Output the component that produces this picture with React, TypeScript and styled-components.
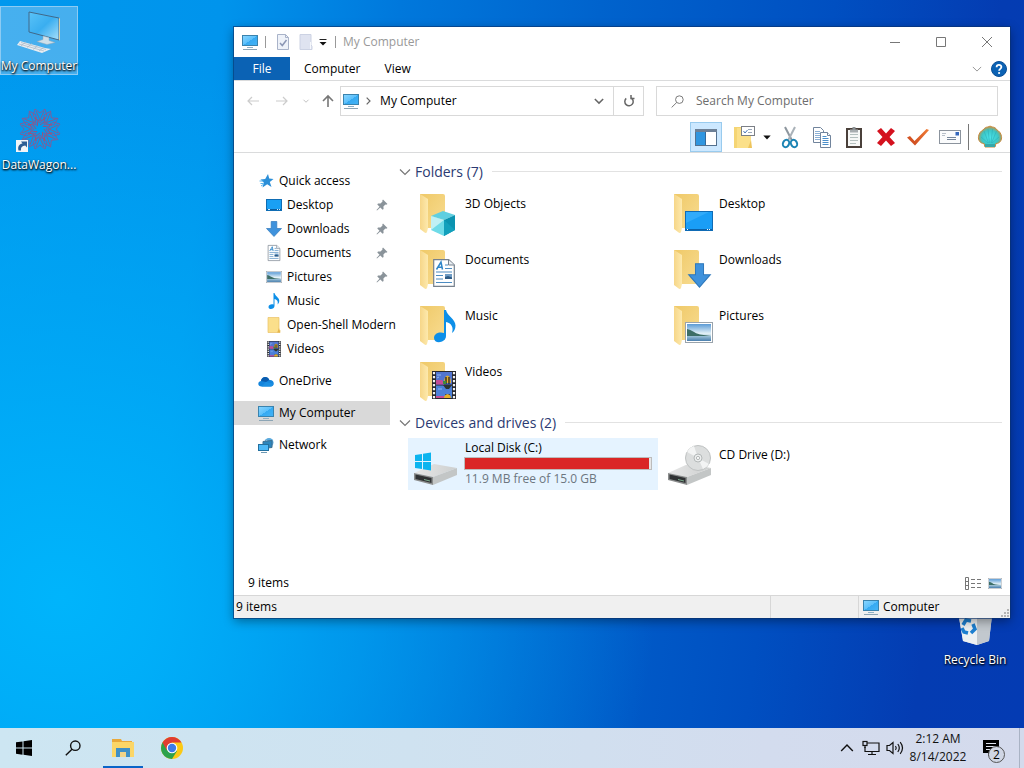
import React from 'react';
import styled, { createGlobalStyle, css } from 'styled-components';

const GlobalStyle = createGlobalStyle`
  * { box-sizing: border-box; }
  html, body { margin: 0; padding: 0; }
  body, button, input {
    font-family: "Open Sans", "Noto Sans", sans-serif;
    font-size: 12px;
    line-height: 16px;
    color: #000;
  }
  button { margin: 0; padding: 0; border: 0; background: none; cursor: default; }
  ul { list-style: none; margin: 0; padding: 0; }
  h2 { margin: 0; font-weight: 400; }
  svg { display: block; flex: none; overflow: visible; }
`;

const Screen = styled.div`
  display: flex;
  flex-direction: column;
  height: 100vh;
  min-height: 600px;
  overflow: hidden;
`;

const Desktop = styled.main`
  position: relative;
  flex: 1;
  min-height: 0;
  background:
    radial-gradient(ellipse 58% 75% at 6% 82%, rgba(0, 182, 252, 0.95), rgba(0, 174, 248, 0.6) 50%, rgba(0, 160, 240, 0) 100%),
    linear-gradient(97deg, #0098ee 0%, #0094ec 20%, #0078dc 36%, #0063cd 54%, #004fc1 75%, #043cb2 90%, #043bb3 100%);
`;

const DesktopItem = styled.button<{ $selected?: boolean }>`
  position: absolute;
  display: flex;
  flex-direction: column;
  align-items: center;
  justify-content: space-between;
  width: 78px;
  height: 69px;
  color: #fff;
  text-shadow: 0 1px 2px #000, 1px 1px 2px rgba(0, 0, 0, 0.8);
  white-space: nowrap;
  border: 1px solid transparent;
  ${(p) => p.$selected && css`
    background: rgba(140, 200, 240, 0.5);
    border-color: rgba(170, 215, 245, 0.7);
  `}
`;
const ComputerSpot = styled(DesktopItem)`left: 0; top: 6px;`;
const ShortcutSpot = styled(DesktopItem)`left: 0; top: 105px;`;
const RecycleSpot = styled(DesktopItem)`right: 10px; bottom: 59px;`;

const Window = styled.section`
  position: absolute;
  left: 234px;
  right: 14px;
  top: 27px;
  bottom: 110px;
  display: flex;
  flex-direction: column;
  background: #fff;
  box-shadow: 0 0 0 1px rgba(10, 50, 110, 0.6), 0 3px 10px rgba(0, 0, 0, 0.4);
`;

const TitleBar = styled.header`
  display: flex;
  align-items: center;
  height: 30px;
  padding-left: 8px;
`;
const Title = styled.h1`
  flex: 1;
  margin: 0 0 0 7px;
  font-size: 12px;
  font-weight: 400;
  color: #999;
`;
const Rule = styled.span<{ $space: string; $tall?: boolean }>`
  width: 1px;
  height: ${(p) => (p.$tall ? 26 : 12)}px;
  margin: ${(p) => p.$space};
  background: ${(p) => (p.$tall ? '#777' : '#999')};
`;
const IconButton = styled.button<{ $w: number; $h?: number; $active?: boolean }>`
  display: flex;
  align-items: center;
  justify-content: center;
  flex: none;
  width: ${(p) => p.$w}px;
  height: ${(p) => p.$h ?? 30}px;
  ${(p) => p.$active && css`
    background: #cce8ff;
    border: 1px solid #99cbee;
  `}
`;

const Ribbon = styled.nav`
  display: flex;
  align-items: stretch;
  height: 24px;
  padding-right: 3px;
  border-bottom: 1px solid #dadbdc;
`;
const RibbonTab = styled.button<{ $file?: boolean }>`
  padding: 0 10px 0 14px;
  ${(p) => p.$file && css`
    width: 56px;
    padding: 0;
    color: #fff;
    background: #0b62b4;
  `}
`;
const Spacer = styled.span`flex: 1;`;

const AddressRow = styled.div`
  display: flex;
  align-items: center;
  height: 40px;
  padding: 0 12px 0 4px;
`;
const AddressBox = styled.div`
  display: flex;
  align-items: center;
  flex: 304 1 304px;
  height: 30px;
  border: 1px solid #d9d9d9;
`;
const Crumb = styled.button`
  display: flex;
  align-items: center;
  gap: 5px;
  flex: 1;
  padding-left: 2px;
  text-align: left;
`;
const Refresh = styled(IconButton)`
  border-left: 1px solid #d9d9d9;
`;
const SearchBox = styled.label`
  display: flex;
  align-items: center;
  gap: 12px;
  flex: 342 1 342px;
  height: 30px;
  margin-left: 12px;
  padding: 0 14px;
  border: 1px solid #d9d9d9;
`;
const SearchInput = styled.input`
  flex: 1;
  min-width: 0;
  padding: 0;
  border: 0;
  outline: 0;
  background: none;
  &::placeholder { color: #6d6d6d; opacity: 1; }
`;

const Toolbar = styled.div`
  display: flex;
  align-items: flex-end;
  justify-content: flex-end;
  height: 32px;
  padding-right: 4px;
  border-bottom: 1px solid #dadbdc;
`;
const SplitButton = styled.div`
  display: flex;
  margin-left: 6px;
`;

const Body = styled.div`
  display: flex;
  flex: 1;
  min-height: 0;
`;
const NavPane = styled.nav`
  flex: none;
  width: 156px;
  padding-top: 16px;
`;
const NavGroup = styled.ul`
  margin-bottom: 8px;
`;
const NavItem = styled.button<{ $child?: boolean; $selected?: boolean }>`
  display: flex;
  align-items: center;
  gap: 5px;
  width: 100%;
  height: 24px;
  padding-left: ${(p) => (p.$child ? 32 : 24)}px;
  padding-right: 2px;
  text-align: left;
  white-space: nowrap;
  background: ${(p) => (p.$selected ? '#d9d9d9' : 'none')};
`;
const NavLabel = styled.span`
  flex: 1;
`;

const Files = styled.div`
  flex: 1;
  min-width: 0;
  padding: 3px 8px 0 9px;
`;
const GroupHeader = styled.h2`
  display: flex;
  align-items: center;
  gap: 4px;
  height: 31px;
  font-size: 14px;
  line-height: 20px;
  color: #2b3a72;
  &::after {
    content: "";
    flex: 1;
    height: 1px;
    margin-left: 5px;
    background: #e2e2e2;
  }
`;
const Tiles = styled.ul`
  display: grid;
  grid-template-columns: repeat(auto-fill, 250px);
  gap: 4px;
  padding-left: 9px;
`;
const Tile = styled.li<{ $hover?: boolean }>`
  display: flex;
  gap: 5px;
  height: 52px;
  padding-left: 4px;
  background: ${(p) => (p.$hover ? '#e5f3ff' : 'none')};
`;
const TileText = styled.div<{ $drive?: boolean }>`
  display: flex;
  flex-direction: column;
  flex: 1;
  padding-top: ${(p) => (p.$drive ? 2 : 9)}px;
  padding-right: 6px;
`;
const UsageTrack = styled.div`
  height: 13px;
  margin: 1px 0 1px -1px;
  border: 1px solid #bcbcbc;
  background: #e6e6e6;
`;
const UsageFill = styled.div`
  height: 100%;
  background: #da2626;
`;
const Muted = styled.span`color: #6d7680;`;

const ItemCount = styled.div`
  display: flex;
  align-items: center;
  gap: 6px;
  height: 24px;
  padding: 0 7px 0 14px;
`;
const StatusBar = styled.footer`
  display: flex;
  height: 23px;
  background: #f0f0f0;
  border-top: 1px solid #d7d7d7;
`;
const StatusCell = styled.div<{ $w?: number }>`
  display: flex;
  align-items: center;
  gap: 4px;
  flex: ${(p) => (p.$w ? 'none' : '1')};
  width: ${(p) => (p.$w ? p.$w + 'px' : 'auto')};
  padding-left: ${(p) => (p.$w ? 4 : 2)}px;
  & + & { border-left: 1px solid #d7d7d7; }
`;
const GripCorner = styled.span`
  align-self: flex-end;
  padding: 0 1px 1px 0;
`;

const Taskbar = styled.footer`
  display: flex;
  flex: none;
  height: 40px;
  background: linear-gradient(90deg, #cde6f2 0%, #cfe2f0 40%, #d3dcee 75%, #d4daec 100%);
`;
const TaskButton = styled(IconButton)<{ $running?: boolean }>`
  margin-right: 1px;
  ${(p) => p.$running && css`
    background: linear-gradient(#0a64c8, #0a64c8) center bottom / 40px 2px no-repeat;
  `}
`;
const Clock = styled.button`
  width: 62px;
  line-height: 18px;
  color: #111;
`;
const ShowDesktop = styled.button`
  width: 5px;
  border-left: 1px solid #a9b3c4;
`;

/* ---------- icons ---------- */

const Monitor = () => (
  <svg width="16" height="16" viewBox="0 0 16 16">
    <defs>
      <linearGradient id="screen" x1="0" y1="0" x2="1" y2="1">
        <stop offset="0" stopColor="#8ad6ff" />
        <stop offset="0.5" stopColor="#5cc0fb" />
        <stop offset="0.51" stopColor="#36aaf2" />
        <stop offset="1" stopColor="#45b4f6" />
      </linearGradient>
    </defs>
    <rect x="0.5" y="1.5" width="15" height="10" fill="url(#screen)" stroke="#3a83ae" />
    <path d="M5 13.5h6" stroke="#8fb0c4" />
    <path d="M1 15.5h14" stroke="#8ca5b5" />
  </svg>
);
const CheckPage = () => (
  <svg width="14" height="16" viewBox="0 0 14 16" fill="none">
    <path d="M1.500.5h8l3 3v12h-11z" fill="#eef2f9" stroke="#a9b3c9" />
    <path d="M9.500.5v3h3" stroke="#a9b3c9" />
    <path d="M4 9l2.300 2.500L10.500 6" stroke="#8b96b4" strokeWidth="1.500" />
  </svg>
);
const BlankPage = () => (
  <svg width="14" height="16" viewBox="0 0 14 16">
    <path d="M1 .5h11v10l1 2v3H1z" fill="#dfe3f0" stroke="#ccd2e3" />
    <path d="M11.500 8v7" stroke="#f6f8fc" />
  </svg>
);
const CustomizeCaret = () => (
  <svg width="8" height="7" viewBox="0 0 8 7">
    <path d="M.5.5h7" stroke="#222" />
    <path d="M.5 3h7L4 6.500z" fill="#111" />
  </svg>
);
const Stroke = ({ d, w = 12, c = '#777', s = 1 }: { d: string; w?: number; c?: string; s?: number }) => (
  <svg width={w} height={w} viewBox="0 0 12 12" fill="none" stroke={c} strokeWidth={s}>
    <path d={d} />
  </svg>
);
const Chevron = ({ w = 10, c = '#777', s = 1.2 }: { w?: number; c?: string; s?: number }) => (
  <Stroke w={w} c={c} s={s} d="M1 3.500l5 5 5-5" />
);
const Help = () => (
  <svg width="16" height="16" viewBox="0 0 16 16" fill="none">
    <circle cx="8" cy="8" r="7.500" fill="#0b62b4" stroke="#0a4f96" />
    <path d="M5.600 6.200c0-3 4.800-3 4.800-.2 0 1.800-2.300 1.900-2.300 3.700" stroke="#fff" strokeWidth="1.800" />
    <circle cx="8.100" cy="12" r="1.100" fill="#fff" />
  </svg>
);
const Magnifier = ({ w, c, s }: { w: number; c: string; s: number }) => (
  <svg width={w} height={w} viewBox="0 0 16 16" fill="none" stroke={c} strokeWidth={s}>
    <circle cx="10.300" cy="5.700" r="4.700" />
    <path d="M7 9.200L.8 15.300" />
  </svg>
);
const RefreshIcon = () => (
  <svg width="12" height="12" viewBox="0 0 12 12" fill="none" stroke="#666" strokeWidth="1.500">
    <path d="M8.300 3A4.200 4.200 0 1 1 3.200 3.400" />
    <path d="M8 0v3.500h3.500" />
  </svg>
);
const PaneIcon = () => (
  <svg width="22" height="18" viewBox="0 0 22 18">
    <rect x="0.5" y="1.500" width="21" height="16" fill="#fff" stroke="#54718f" />
    <path d="M0 2.500h22" stroke="#6d8096" strokeWidth="3" />
    <rect x="1" y="4" width="9" height="13" fill="#2f96e0" />
    <path d="M10.500 4v13" stroke="#33699a" />
  </svg>
);
const NewFolder = () => (
  <svg width="22" height="24" viewBox="0 0 22 24">
    <path d="M1 2h10l2 1v20H1z" fill="#f5d574" />
    <path d="M4 3h14v20H4z" fill="#fbe08a" />
    <path d="M18 15l1 8h-4z" fill="#eec45c" />
    <rect x="8.500" y="1.500" width="13" height="9" fill="#fff" stroke="#7b7f86" />
    <path d="M10.500 6l1.500 2 2.500-3" fill="none" stroke="#4a76b8" />
    <path d="M15 4.500h4M15 7.500h4" stroke="#9aa7b8" />
  </svg>
);
const SmallCaret = () => (
  <svg width="8" height="5" viewBox="0 0 8 5"><path d="M.3.500h7.400L4 4.500z" fill="#111" /></svg>
);
const Scissors = () => (
  <svg width="18" height="24" viewBox="0 0 18 24" fill="none">
    <path d="M4 2l7 13.500" stroke="#8d969e" strokeWidth="2" />
    <path d="M14 2L7 15.500" stroke="#a9b1b8" strokeWidth="2" />
    <ellipse cx="5" cy="18.500" rx="3" ry="3.800" transform="rotate(25 5 18.500)" stroke="#1c84b4" strokeWidth="2" />
    <ellipse cx="13" cy="18.500" rx="3" ry="3.800" transform="rotate(-25 13 18.500)" stroke="#1c84b4" strokeWidth="2" />
  </svg>
);
const CopyIcon = () => (
  <svg width="20" height="24" viewBox="0 0 20 24" fill="#fff" stroke="#71849c">
    <path d="M1.500 2.500h7l3 3v12h-10z" />
    <path d="M3 6.500h5M3 8.500h6M3 10.500h6M3 12.500h6M3 14.500h6" stroke="#8bb0d6" />
    <path d="M8.500 7.500h7l3 3v12h-10z" />
    <path d="M15.500 7.500v3h3" />
    <path d="M10.500 11.500h4M10.500 13.500h6M10.500 15.500h6M10.500 17.500h6M10.500 19.500h6" stroke="#4b8fca" />
  </svg>
);
const Clipboard = () => (
  <svg width="18" height="24" viewBox="0 0 18 24">
    <rect x="1" y="3" width="16" height="20" fill="#4a403a" />
    <rect x="3" y="5" width="12" height="16" fill="#f7f8f7" />
    <path d="M5 4.500h8v3H5z" fill="#a8adb0" />
    <path d="M7.500 2h3v3h-3z" fill="#8b9194" />
    <path d="M5 9.500h8M5 12.500h8M5 15.500h8M5 18.500h6" stroke="#b5c0bf" />
  </svg>
);
const RedCross = () => (
  <svg width="20" height="20" viewBox="0 0 20 20">
    <path d="M1 4l4-3 5 5.500L15 1l4 3-5.500 6L19 16l-4 3-5-5.500L5 19l-4-3 5.500-6z" fill="#d4111e" />
  </svg>
);
const OrangeCheck = () => (
  <svg width="22" height="18" viewBox="0 0 22 18">
    <defs>
      <linearGradient id="check" x1="0" y1="1" x2="1" y2="0">
        <stop offset="0" stopColor="#c8431c" /><stop offset="1" stopColor="#f07c35" />
      </linearGradient>
    </defs>
    <path d="M0 9.500l3-1.500 4.500 5L19.500 1l2.500 1L8 17.500z" fill="url(#check)" />
  </svg>
);
const Envelope = () => (
  <svg width="22" height="14" viewBox="0 0 22 14">
    <rect x="0.500" y="0.500" width="21" height="13" fill="#fafbfc" stroke="#8b939d" />
    <path d="M3 3.500h4M3 5.500h3" stroke="#b7bfc9" />
    <path d="M8 7.500h9M8 9.500h9" stroke="#75859a" />
    <rect x="16.500" y="2" width="3.500" height="3.500" fill="#3366bb" />
  </svg>
);
const Shell = () => (
  <svg width="24" height="22" viewBox="0 0 24 22">
    <defs>
      <radialGradient id="shell" cx="0.5" cy="0.550" r="0.550">
        <stop offset="0" stopColor="#4be4ea" /><stop offset="0.650" stopColor="#3cc6c6" /><stop offset="1" stopColor="#c98f42" />
      </radialGradient>
    </defs>
    <path d="M7 21l-1-3.500C2 17.500 0 14 .5 10.500 1 7 3 5 5 4c1.500-2 3-3 5-3 1.500-1 3-1 4 0 2 0 4 1 5 3 2 1 4 3 4.500 6.500.5 3.500-1.500 7-5.500 7L17 21z" fill="url(#shell)" stroke="#c58a3e" />
    <path d="M10.500 17L6 5M11.500 17L10 3M13 17l1.500-14M13.500 17L18.500 5M10 17L3 11M14 17l7-6" stroke="#2aa9b2" strokeWidth="0.500" fill="none" />
    <path d="M7 18h10v3H7z" fill="#36a7aa" />
  </svg>
);

const Star = () => (
  <svg width="16" height="16" viewBox="0 0 16 16">
    <path d="M10 1l1.200 4.500 4.300.500-3.700 2.900 1.700 5.100-4.300-2.800L4.500 14.500l1.300-5L2.500 6.500l4.700-.5z" fill="#2b8fd8" />
    <path d="M1.500 8h4M2.500 10.500h3M3 13l3-2" stroke="#58b4ee" />
  </svg>
);
const DesktopGlyph = () => (
  <svg width="16" height="12" viewBox="0 0 16 12">
    <rect x="0.500" y="0.500" width="15" height="11" fill="#1aa0f4" stroke="#0f6db4" />
    <path d="M1 10.500h14" stroke="#0b5d9e" />
    <path d="M2 10.500h2M11 10.500h1M13 10.500h1" stroke="#cfeaff" />
  </svg>
);
const DownArrow = ({ w = 16, h = 16 }: { w?: number; h?: number }) => (
  <svg width={w} height={h} viewBox="0 0 16 16" preserveAspectRatio="none">
    <path d="M5.200.5h5.600v7h4.700L8 15.500.5 7.500h4.700z" fill="#3f92dc" stroke="#2f78bb" strokeWidth="0.700" />
  </svg>
);
const DocLines = ({ w = 16, h = 16 }: { w?: number; h?: number }) => (
  <svg width={w} height={h} viewBox="0 0 22 28">
    <path d="M.7.700h15L21.300 6v21.300H.7z" fill="#fff" stroke="#76818d" strokeWidth="1.200" />
    <path d="M15.500.7V6h5.800" fill="#e8edf2" stroke="#76818d" />
    <path d="M3.500 10.500L8 3l1.500 7.500M5 8.200h4" fill="none" stroke="#2f86c9" strokeWidth="1.500" />
    <path d="M12 6h3M12 9.500h7M3 13h16M3 16.500h7M3 20h7M3 23.500h16" stroke="#4c8cc2" strokeWidth="1.200" />
    <path d="M12 15h7v5h-7z" fill="#6f9cc4" />
    <path d="M12 18l3-1 4 1.500V20h-7z" fill="#2d5b85" />
  </svg>
);
const Picture = ({ w = 16, h = 12 }: { w?: number; h?: number }) => (
  <svg width={w} height={h} viewBox="0 0 28 21" preserveAspectRatio="none">
    <defs>
      <linearGradient id="sky" x1="0" y1="0" x2="0" y2="1">
        <stop offset="0" stopColor="#5b9bd6" /><stop offset="0.550" stopColor="#e2f0f6" /><stop offset="1" stopColor="#6fa2c4" />
      </linearGradient>
      <linearGradient id="water" x1="0" y1="0" x2="0" y2="1">
        <stop offset="0" stopColor="#9cc1d6" /><stop offset="1" stopColor="#4a7fae" />
      </linearGradient>
    </defs>
    <rect x="0.500" y="0.500" width="27" height="20" fill="#fff" stroke="#9aa3ab" />
    <rect x="2" y="2" width="24" height="17" fill="url(#sky)" />
    <path d="M2 7c5 1 7 4 13 5.500l11 1.500H2z" fill="#3d6e66" />
    <path d="M2 14h24v5H2z" fill="url(#water)" />
  </svg>
);
const Note = ({ w = 16, h = 16 }: { w?: number; h?: number }) => (
  <svg width={w} height={h} viewBox="0 0 22 32">
    <path d="M10 0h2c1 6 9.500 9 9.500 15.500 0 3.500-1.500 6-3.500 7.500 2-6-1-10-6-11v14c0 7-12 8.500-12 2 0-5 6-6.500 10-5z" fill="#0d8fe8" />
  </svg>
);
const FolderSmall = () => (
  <svg width="16" height="16" viewBox="0 0 16 16">
    <path d="M2 .5h11v12l1 1v2H2z" fill="#fbdf8b" stroke="#e9c265" strokeWidth="0.700" />
    <path d="M13 11l1.200 4.500h-3z" fill="#e6b64d" />
  </svg>
);
const Film = ({ w = 16, h = 16 }: { w?: number; h?: number }) => (
  <svg width={w} height={h} viewBox="0 0 24 28">
    <rect x="0" y="0" width="24" height="28" fill="#26272d" />
    <path d="M2 1v27M22 1v27" stroke="#f4f4f4" strokeWidth="2.200" strokeDasharray="2.200 1.800" />
    <rect x="4" y="1" width="16" height="12.500" fill="#5275cf" />
    <rect x="4" y="14.500" width="16" height="12.500" fill="#4b80d8" />
    <path d="M4 9h6l2 2v2.500H4zM4 25h8v2H4z" fill="#c24c96" />
    <path d="M12 12c0-10 7-9 7 0z" fill="#e6af27" />
    <path d="M14 6v7M17 6v7M14 23v4M17 23v4" stroke="#212029" strokeWidth="1.300" />
    <path d="M12 27c0-5 7-5 7 0z" fill="#e6af27" />
    <path d="M11 14h9l-3 4h-3z" fill="#2d3530" />
    <path d="M11 10h3v3h-3z" fill="#3a8c3d" />
    <path d="M5 4h4M6 18h4M5 7l2-1" stroke="#8fb8ee" />
  </svg>
);
const Cloud = () => (
  <svg width="16" height="11" viewBox="0 0 16 11">
    <path d="M3.500 10.500C-.5 10.500-.8 5.500 3 5 3.500 0 10-.5 11.300 4c5.200-.8 6.200 6.500 1.200 6.500z" fill="#1384dc" />
    <path d="M3 5C3.500 0 10-.5 11.300 4L8 6z" fill="#0a5cae" />
    <path d="M3.500 10.500h9c2 0 3-1.500 2.700-3L8 6z" fill="#1b8fe2" />
  </svg>
);
const Network = () => (
  <svg width="16" height="16" viewBox="0 0 16 16">
    <circle cx="11" cy="5.500" r="4.500" fill="#5aa9dc" />
    <path d="M8 3l6 5M9 8l5-5" stroke="#b9def5" />
    <path d="M5 4.500l9-1v7l-9 1z" fill="#2d86bd" stroke="#3f6f90" />
    <rect x="0.500" y="7.500" width="10" height="6" fill="#4cb8f7" stroke="#23709f" />
    <path d="M3 15.500h6" stroke="#6d99b4" />
  </svg>
);
const Pin = () => (
  <svg width="12" height="12" viewBox="0 0 12 12">
    <path d="M7 .5L11.500 5l-1.300.7-.8-.2-2 2 .2 2.500-1 .7-2.300-2.300L1 11.500l-.5-.5 3-3.300L1.300 5.400l.7-1 2.500.2 2-2-.2-1z" fill="#8a939a" />
  </svg>
);

const FolderBase = () => (
  <>
    <defs>
      <linearGradient id="folderBack" x1="0" y1="0" x2="1" y2="1">
        <stop offset="0" stopColor="#efc968" /><stop offset="1" stopColor="#f8dc91" />
      </linearGradient>
      <linearGradient id="folderFront" x1="0" y1="0" x2="1" y2="0">
        <stop offset="0" stopColor="#f6d688" /><stop offset="1" stopColor="#fde9ad" />
      </linearGradient>
    </defs>
    <path d="M8 7h23q2 0 2 2v32H12z" fill="url(#folderBack)" />
    <path d="M8 7l8 5v29l-1 4q-1 2-3 0l-4-3z" fill="url(#folderFront)" />
  </>
);
type Kind = 'cube' | 'desktop' | 'doc' | 'down' | 'note' | 'pic' | 'film';
const Offset: Record<Kind, [number, number]> = {
  cube: [19, 25], desktop: [19, 24], doc: [21, 16], down: [22, 20], note: [22, 11], pic: [19, 23], film: [20, 16],
};
const BigFolder = ({ kind }: { kind: Kind }) => (
  <svg width="48" height="48" viewBox="0 0 48 48">
    <FolderBase />
    <g transform={`translate(${Offset[kind][0]} ${Offset[kind][1]})`}>
      {kind === 'cube' && (
        <g>
          <path d="M12-1l12 4-11 5L0 4z" fill="#5fcfe0" />
          <path d="M0 4l13 4v16L0 18z" fill="#6fdbe8" />
          <path d="M24 3L13 8v16l11-6z" fill="#0b93b0" />
          <path d="M0 4l13 4-13 10z" fill="#c0f0f4" />
          <path d="M13 8l11 10-11 6z" fill="#12a0bc" />
        </g>
      )}
      {kind === 'desktop' && (
        <g>
          <rect x="0.500" y="0.500" width="27" height="19" fill="#1a9ef6" stroke="#0f6bb5" />
          <path d="M1 12L24 1H1z" fill="#31abfa" />
          <path d="M1 18.500h26" stroke="#0d62a8" />
          <path d="M22 18.500h1M24 18.500h1M2 18.500h1" stroke="#fff" />
        </g>
      )}
      {kind === 'doc' && <DocLines w={22} h={28} />}
      {kind === 'down' && <DownArrow w={23} h={25} />}
      {kind === 'note' && <Note w={22} h={32} />}
      {kind === 'pic' && <Picture w={28} h={21} />}
      {kind === 'film' && <Film w={24} h={28} />}
    </g>
  </svg>
);
const DriveBase = () => (
  <>
    <defs>
      <linearGradient id="driveTop" x1="0" y1="0" x2="1" y2="0">
        <stop offset="0" stopColor="#e8e8e8" /><stop offset="1" stopColor="#cdcfcf" />
      </linearGradient>
    </defs>
    <path d="M2 35l20-9 23 4-24 9z" fill="url(#driveTop)" />
    <path d="M2 35l19 4v8L2 42z" fill="#8b8d8d" />
    <path d="M21 39l24-9v7l-24 10z" fill="#c3c6c6" />
    <path d="M3.500 36.500l16 3.600v5l-16-4z" fill="#303234" />
    <path d="M12 41.500l6 1.500" stroke="#7fae90" />
  </>
);
const SystemDrive = () => (
  <svg width="48" height="52" viewBox="0 0 48 52">
    <DriveBase />
    <path d="M3 17l7-1v7H3zM11 15.800l8-1.300V23h-8zM3 24h7v7l-7-1zM11 24h8v8.500l-8-1.300z" fill="#0cb4ef" />
  </svg>
);
const CdDrive = () => (
  <svg width="48" height="52" viewBox="0 0 48 52">
    <DriveBase />
    <circle cx="32" cy="20" r="12.500" fill="#dcdede" stroke="#bfc2c2" />
    <path d="M32 20L21 14a12.500 12.500 0 0 1 7-6zM32 20l11 6a12.500 12.500 0 0 1-6 5z" fill="#f3f4f4" />
    <circle cx="32" cy="20" r="4" fill="#eceeee" stroke="#b4b8b8" />
    <circle cx="32" cy="20" r="1.600" fill="#fff" stroke="#b4b8b8" />
  </svg>
);

const DetailsView = () => (
  <svg width="16" height="13" viewBox="0 0 16 13" fill="none" stroke="#777">
    <path d="M.5.5h3v12h-3zM.5 4.500h3M.5 8.500h3" />
    <path d="M6 2.500h4M12 2.500h4M6 6.500h4M12 6.500h4M6 10.500h4M12 10.500h4" />
  </svg>
);
const Grip = () => (
  <svg width="8" height="8" viewBox="0 0 8 8" fill="#b4b4b4">
    <path d="M6 0h2v2H6zM6 3h2v2H6zM3 3h2v2H3zM6 6h2v2H6zM3 6h2v2H3zM0 6h2v2H0z" />
  </svg>
);

const BigComputer = () => (
  <svg width="46" height="46" viewBox="0 0 46 46">
    <defs>
      <linearGradient id="bigScreen" x1="0" y1="0" x2="1" y2="1">
        <stop offset="0" stopColor="#5ac3f8" /><stop offset="0.500" stopColor="#3aaef0" /><stop offset="1" stopColor="#a8e0fb" />
      </linearGradient>
    </defs>
    <path d="M13 5l30 6v22l-30-8z" fill="url(#bigScreen)" stroke="#40698a" />
    <path d="M43 11l1 .500v22l-1-.5z" fill="#d9cfa8" />
    <path d="M27 29l6 1.500v3l6 2-8 2-10-3 6-2z" fill="#cfe0ea" stroke="#91a9b8" strokeWidth="0.500" />
    <path d="M4 34l25 7 6 1-9 4L1 38z" fill="#e8edf2" />
    <path d="M5 35.500l25 7M3 37l25 7M10 34.800l-5 4M16 36.500l-5 4M22 38.500l-5 4M28 40l-5 4" stroke="#a6b7c6" strokeWidth="0.700" />
  </svg>
);
const Rosette = () => (
  <svg width="48" height="46" viewBox="0 0 48 46" fill="none">
    {Array.from({ length: 8 }, (_, i) => (
      <g key={i} transform={`rotate(${i * 45} 25 23)`} stroke="#7b5f9c" strokeWidth="1">
        <path d="M25 17l-7-7 2-7 5 4 5-4 2 7z" />
        <path d="M19 12l6 3 6-3M21 5l4 9 4-9" stroke="#a04f78" strokeWidth="0.800" />
        <path d="M25 19l4-3" stroke="#a04f78" />
      </g>
    ))}
    <rect x="1" y="34" width="12" height="12" fill="#f2f5f8" />
    <path d="M3.500 44.500c-1-4 .5-6.500 4-7L6 35.500h6v6l-1.800-2C7 40 5.500 41.500 6 44.500z" fill="#2d5d94" />
  </svg>
);
const RecycleBin = () => (
  <svg width="40" height="46" viewBox="0 0 40 46">
    <path d="M2 4l30-2 6 4-4 34-12 4-14-4z" fill="#dfe3e7" />
    <path d="M22 6l16 0-4 34-12 4z" fill="#c2c8ce" />
    <path d="M22 6v38l-14-4L2 5z" fill="#edf0f2" />
    <g fill="none" stroke="#1d7fd0" strokeWidth="3.500">
      <path d="M8 24l3-5 5 1" /><path d="M18 23l2 5-4 4" /><path d="M13 32l-4-1-2-4" />
    </g>
  </svg>
);
const WindowsLogo = () => (
  <svg width="16" height="16" viewBox="0 0 16 16">
    <path d="M0 2.300l6.500-.9v6.100H0zM7.500 1.300L16 0v7.500H7.500zM0 8.500h6.500v6.200L0 13.800zM7.500 8.500H16V16l-8.500-1.200z" fill="#000" />
  </svg>
);
const ExplorerIcon = () => (
  <svg width="24" height="20" viewBox="0 0 24 20">
    <path d="M1 1h9l1 2h10v16H1z" fill="#e9a93a" />
    <path d="M1 4h22v15H1z" fill="#fbd667" />
    <path d="M5 10h14v9h-4v-5H9v5H5z" fill="#3f90c6" />
    <path d="M9 14h6v5H9z" fill="#f2d488" />
  </svg>
);
const Chrome = () => (
  <svg width="22" height="22" viewBox="0 0 22 22">
    <circle cx="11" cy="11" r="11" fill="#fbc915" />
    <path d="M11 11L1.500 5.500A11 11 0 0 0 11 22l5-8z" fill="#2ca24c" />
    <path d="M1.500 5.500A11 11 0 0 1 20.500 5.500H11L6 13.500z" fill="#e03c31" />
    <circle cx="11" cy="11" r="5.300" fill="#fff" />
    <circle cx="11" cy="11" r="4.200" fill="#3d7be8" />
  </svg>
);
const NetTray = () => (
  <svg width="18" height="16" viewBox="0 0 18 16" fill="none" stroke="#111" strokeWidth="1.200">
    <path d="M5 3h12v8.500H3V7M10 11.500V14M6 14.500h8" />
    <rect x="1" y="1.500" width="4" height="4" /><path d="M3 5.500V8" />
  </svg>
);
const Speaker = () => (
  <svg width="18" height="16" viewBox="0 0 18 16" fill="none" stroke="#111" strokeWidth="1.200">
    <path d="M1 5.500h2.500L7 2.500v11L3.500 10.500H1z" />
    <path d="M9.500 6q1.500 2 0 4M11.800 4q3 4 0 8M14.200 2.200q4.600 5.800 0 11.600" />
  </svg>
);
const NoticeCount = styled.span`
  position: absolute;
  left: 19px;
  top: 18px;
  width: 17px;
  height: 17px;
  border: 1px solid #555;
  border-radius: 50%;
  background: #d0d6e4;
  line-height: 15px;
`;
const NoticeButton = styled(IconButton)`
  position: relative;
  padding-right: 6px;
`;
const Notice = () => (
  <svg width="16" height="16" viewBox="0 0 16 16">
    <path d="M0 0h16v13H8l-3 3v-3H0z" fill="#000" />
    <path d="M3 3.500h10M3 6.500h10M3 9.500h7" stroke="#dfe4ee" />
  </svg>
);

/* ---------- data ---------- */

const quick: { name: string; icon: React.ReactNode; pinned?: boolean }[] = [
  { name: 'Desktop', icon: <DesktopGlyph />, pinned: true },
  { name: 'Downloads', icon: <DownArrow />, pinned: true },
  { name: 'Documents', icon: <DocLines />, pinned: true },
  { name: 'Pictures', icon: <Picture />, pinned: true },
  { name: 'Music', icon: <Note /> },
  { name: 'Open-Shell Modern', icon: <FolderSmall /> },
  { name: 'Videos', icon: <Film /> },
];
const folders: [string, Kind][] = [
  ['3D Objects', 'cube'], ['Desktop', 'desktop'], ['Documents', 'doc'], ['Downloads', 'down'],
  ['Music', 'note'], ['Pictures', 'pic'], ['Videos', 'film'],
];
const used = 99;

export default function App() {
  return (
    <Screen>
      <GlobalStyle />
      <Desktop>
        <ComputerSpot $selected><BigComputer />My Computer</ComputerSpot>
        <ShortcutSpot><Rosette />DataWagon...</ShortcutSpot>
        <RecycleSpot><RecycleBin />Recycle Bin</RecycleSpot>

        <Window aria-label="My Computer">
          <TitleBar>
            <Monitor />
            <Rule $space="0 5px 0 7px" />
            <IconButton $w={23} aria-label="Properties"><CheckPage /></IconButton>
            <IconButton $w={23} aria-label="New folder"><BlankPage /></IconButton>
            <IconButton $w={12} aria-label="Customize toolbar"><CustomizeCaret /></IconButton>
            <Rule $space="0 0 0 6px" />
            <Title>My Computer</Title>
            <IconButton $w={46} aria-label="Minimize"><Stroke d="M1 6.500h10" /></IconButton>
            <IconButton $w={46} aria-label="Maximize"><Stroke d="M1.500 1.500h9v9h-9z" /></IconButton>
            <IconButton $w={46} aria-label="Close"><Stroke d="M1 1l10 10M11 1L1 11" /></IconButton>
          </TitleBar>

          <Ribbon>
            <RibbonTab $file>File</RibbonTab>
            <RibbonTab>Computer</RibbonTab>
            <RibbonTab>View</RibbonTab>
            <Spacer />
            <IconButton $w={28} $h={23} aria-label="Expand ribbon"><Chevron c="#999" /></IconButton>
            <IconButton $w={16} $h={23} aria-label="Help"><Help /></IconButton>
          </Ribbon>

          <AddressRow>
            <IconButton $w={30} aria-label="Back"><Stroke c="#ccc" s={1.2} d="M12 6H1M5 2L1 6l4 4" /></IconButton>
            <IconButton $w={28} aria-label="Forward"><Stroke c="#ccc" s={1.2} d="M0 6h11M7 2l4 4-4 4" /></IconButton>
            <IconButton $w={20} aria-label="Recent locations"><Chevron w={6} c="#bbb" s={1.8} /></IconButton>
            <IconButton $w={24} aria-label="Up"><Stroke c="#777" s={1.6} d="M6 12V1M1 6l5-5 5 5" /></IconButton>
            <AddressBox>
              <Crumb>
                <Monitor />
                <Stroke w={8} c="#666" s={1.8} d="M4 1l5 5-5 5" />
                <span>&nbsp;My Computer</span>
              </Crumb>
              <IconButton $w={28} $h={28} aria-label="Previous locations"><Chevron c="#666" s={1.8} /></IconButton>
              <Refresh $w={30} $h={28} aria-label="Refresh"><RefreshIcon /></Refresh>
            </AddressBox>
            <SearchBox>
              <Magnifier w={13} c="#777" s={1.2} />
              <SearchInput type="text" placeholder="Search My Computer" aria-label="Search My Computer" />
            </SearchBox>
          </AddressRow>

          <Toolbar>
            <IconButton $w={32} $active aria-label="Navigation pane"><PaneIcon /></IconButton>
            <SplitButton>
              <IconButton $w={32} aria-label="Folder options"><NewFolder /></IconButton>
              <IconButton $w={14} aria-label="More folder options"><SmallCaret /></IconButton>
            </SplitButton>
            <IconButton $w={32} aria-label="Cut"><Scissors /></IconButton>
            <IconButton $w={32} aria-label="Copy"><CopyIcon /></IconButton>
            <IconButton $w={32} aria-label="Paste"><Clipboard /></IconButton>
            <IconButton $w={32} aria-label="Delete"><RedCross /></IconButton>
            <IconButton $w={32} aria-label="Properties"><OrangeCheck /></IconButton>
            <IconButton $w={32} aria-label="Email"><Envelope /></IconButton>
            <Rule $tall $space="0 5px 2px 2px" />
            <IconButton $w={32} aria-label="Classic Explorer settings"><Shell /></IconButton>
          </Toolbar>

          <Body>
            <NavPane>
              <NavGroup>
                <li><NavItem><Star /><NavLabel>Quick access</NavLabel></NavItem></li>
                {quick.map((q) => (
                  <li key={q.name}>
                    <NavItem $child>{q.icon}<NavLabel>{q.name}</NavLabel>{q.pinned && <Pin />}</NavItem>
                  </li>
                ))}
              </NavGroup>
              <NavGroup><li><NavItem><Cloud /><NavLabel>OneDrive</NavLabel></NavItem></li></NavGroup>
              <NavGroup><li><NavItem $selected><Monitor /><NavLabel>My Computer</NavLabel></NavItem></li></NavGroup>
              <NavGroup><li><NavItem><Network /><NavLabel>Network</NavLabel></NavItem></li></NavGroup>
            </NavPane>

            <Files>
              <GroupHeader><Chevron w={12} />Folders (7)</GroupHeader>
              <Tiles>
                {folders.map(([name, kind]) => (
                  <Tile key={name}><BigFolder kind={kind} /><TileText>{name}</TileText></Tile>
                ))}
              </Tiles>
              <GroupHeader><Chevron w={12} />Devices and drives (2)</GroupHeader>
              <Tiles>
                <Tile $hover>
                  <SystemDrive />
                  <TileText $drive>
                    <span>Local Disk (C:)</span>
                    <UsageTrack role="meter" aria-label="Space used" aria-valuenow={used} aria-valuemin={0} aria-valuemax={100}>
                      <UsageFill style={{ width: `${used}%` }} />
                    </UsageTrack>
                    <Muted>11.9 MB free of 15.0 GB</Muted>
                  </TileText>
                </Tile>
                <Tile><CdDrive /><TileText>CD Drive (D:)</TileText></Tile>
              </Tiles>
            </Files>
          </Body>

          <ItemCount>
            <span>9 items</span>
            <Spacer />
            <IconButton $w={16} $h={16} aria-label="Details view"><DetailsView /></IconButton>
            <IconButton $w={16} $h={16} aria-label="Large icons view"><Picture w={14} h={11} /></IconButton>
          </ItemCount>
          <StatusBar>
            <StatusCell>9 items</StatusCell>
            <StatusCell $w={88} />
            <StatusCell $w={152}><Monitor />Computer<Spacer /><GripCorner><Grip /></GripCorner></StatusCell>
          </StatusBar>
        </Window>
      </Desktop>

      <Taskbar>
        <TaskButton $w={48} $h={40} aria-label="Start"><WindowsLogo /></TaskButton>
        <TaskButton $w={48} $h={40} aria-label="Search"><Magnifier w={16} c="#111" s={1.4} /></TaskButton>
        <TaskButton $w={50} $h={40} $running aria-label="File Explorer"><ExplorerIcon /></TaskButton>
        <TaskButton $w={46} $h={40} aria-label="Chrome"><Chrome /></TaskButton>
        <Spacer />
        <IconButton $w={24} $h={40} aria-label="Show hidden icons"><Stroke w={14} c="#111" s={1.2} d="M1 8.500l5-5 5 5" /></IconButton>
        <IconButton $w={24} $h={40} aria-label="Network"><NetTray /></IconButton>
        <IconButton $w={24} $h={40} aria-label="Volume"><Speaker /></IconButton>
        <Clock>2:12 AM<br />8/14/2022</Clock>
        <NoticeButton $w={50} $h={40} aria-label="Notifications, 2 new"><Notice /><NoticeCount>2</NoticeCount></NoticeButton>
        <ShowDesktop aria-label="Show desktop" />
      </Taskbar>
    </Screen>
  );
}
